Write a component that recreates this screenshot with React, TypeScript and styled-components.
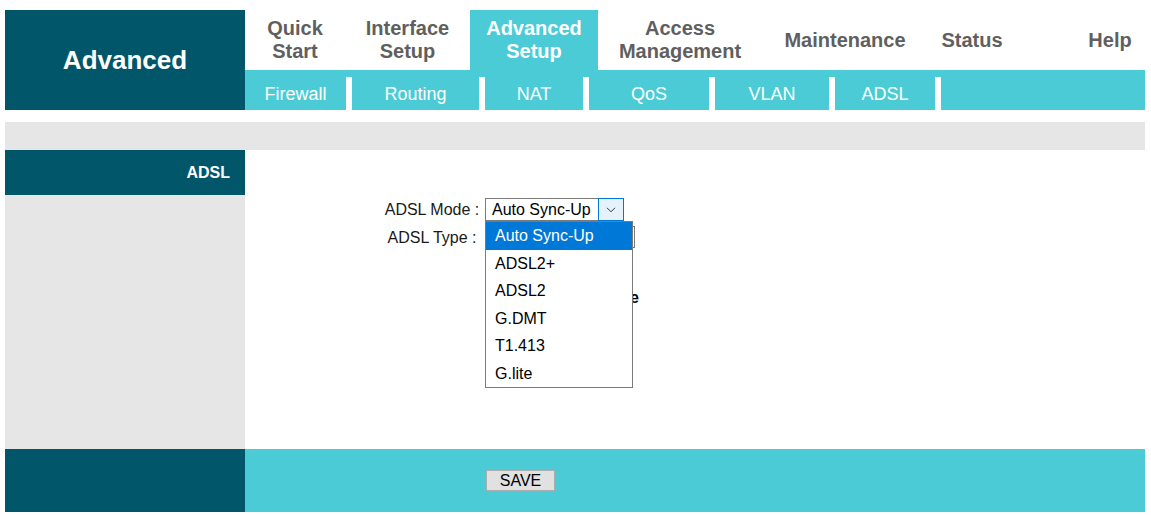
import React from "react";
import styled, { createGlobalStyle } from "styled-components";

const DARK = "#02566a";
const TEAL = "#4bcbd6";
const GRAY = "#e6e6e6";

const GlobalStyle = createGlobalStyle`
  html, body { background: #ffffff; }
  body {
    margin: 10px 0 0 5px;
    font-family: "Liberation Sans", Arial, sans-serif;
  }
  * { box-sizing: border-box; }
`;

const Page = styled.div`
  width: 1140px;
  display: flex;
  flex-direction: column;
`;

/* ---------- header ---------- */
const Header = styled.header`
  display: flex;
  height: 100px;
`;

const Brand = styled.div`
  width: 240px;
  background: ${DARK};
  color: #fff;
  font-weight: bold;
  font-size: 26px;
  display: flex;
  align-items: center;
  justify-content: center;
`;

const NavColumn = styled.div`
  flex: 1;
  display: flex;
  flex-direction: column;
`;

const TopMenu = styled.nav`
  height: 60px;
  display: flex;
`;

const TopItem = styled.div<{ $w?: number; $active?: boolean }>`
  ${(p) => (p.$w ? `width: ${p.$w}px;` : "flex: 1;")}
  display: flex;
  align-items: center;
  justify-content: center;
  text-align: center;
  font-weight: bold;
  font-size: 20px;
  line-height: 23px;
  color: ${(p) => (p.$active ? "#ffffff" : "#5f5f5f")};
  background: ${(p) => (p.$active ? TEAL : "transparent")};
`;

const SubMenu = styled.nav`
  height: 40px;
  background: ${TEAL};
  padding-top: 7px;
  display: flex;
`;

const SubItem = styled.div<{ $w: number }>`
  width: ${(p) => p.$w}px;
  border-right: 6px solid #ffffff;
  display: flex;
  align-items: center;
  justify-content: center;
  color: #ffffff;
  font-size: 18px;
  padding-top: 2px;
`;

/* ---------- strip ---------- */
const Strip = styled.div`
  margin-top: 12px;
  height: 28px;
  background: ${GRAY};
`;

/* ---------- body ---------- */
const Body = styled.div`
  display: flex;
  height: 299px;
`;

const Sidebar = styled.aside`
  width: 240px;
  background: ${GRAY};
  display: flex;
  flex-direction: column;
`;

const SideTitle = styled.div`
  height: 45px;
  background: ${DARK};
  color: #fff;
  font-weight: bold;
  font-size: 16px;
  display: flex;
  align-items: center;
  justify-content: flex-end;
  padding-right: 15px;
`;

const Content = styled.main`
  flex: 1;
  background: #ffffff;
  padding: 48px 0 0 137px;
  display: flex;
  flex-direction: column;
`;

const FormRow = styled.div<{ $mt?: number }>`
  display: flex;
  align-items: center;
  gap: 3px;
  margin-top: ${(p) => p.$mt ?? 0}px;
`;

const Label = styled.div<{ $shift?: number }>`
  width: 100px;
  text-align: center;
  font-size: 16px;
  color: #1a1a1a;
  padding-top: ${(p) => p.$shift ?? 0}px;
`;

const Field = styled.div`
  position: relative;
`;

const SelectBox = styled.div<{ $w: number; $h: number }>`
  width: ${(p) => p.$w}px;
  height: ${(p) => p.$h}px;
  border: 1px solid #7a7a7a;
  background: #fff;
  display: flex;
  align-items: center;
  font-size: 16px;
  color: #000;
  padding-left: 6px;
`;

const SelectText = styled.span`
  flex: 1;
`;

const ArrowButton = styled.span`
  width: 26px;
  height: 23px;
  margin: -1px -1px -1px 0;
  border: 1px solid #0078d7;
  background: #e5f1fb;
  display: flex;
  align-items: center;
  justify-content: center;
`;

const Note = styled.div`
  margin-left: 104px;
  padding-left: 1px;
  font-size: 16px;
  font-weight: bold;
  color: #000;
`;

/* open option list of the mode select */
const OptionList = styled.ul`
  position: absolute;
  left: 0;
  top: 23px;
  width: 148px;
  margin: 0;
  padding: 0;
  list-style: none;
  background: #fff;
  border: 1px solid #7a7a7a;
  z-index: 5;
`;

const Option = styled.li<{ $selected?: boolean }>`
  height: 27.5px;
  display: flex;
  align-items: center;
  padding-left: 9px;
  padding-top: 1px;
  font-size: 16px;
  color: ${(p) => (p.$selected ? "#fff" : "#000")};
  background: ${(p) => (p.$selected ? "#0078d7" : "transparent")};
`;

/* ---------- footer ---------- */
const Footer = styled.footer`
  display: flex;
  height: 63px;
`;

const FooterSide = styled.div`
  width: 240px;
  background: ${DARK};
`;

const FooterMain = styled.div`
  flex: 1;
  background: ${TEAL};
  padding: 21px 0 0 241px;
`;

const SaveButton = styled.button`
  width: 69px;
  height: 21px;
  background: #e1e1e1;
  border: 1px solid #adadad;
  font-family: "Liberation Sans", Arial, sans-serif;
  font-size: 16px;
  color: #000;
  padding: 0;
  display: flex;
  align-items: center;
  justify-content: center;
`;

const topItems: { label: string[]; w?: number; active?: boolean }[] = [
  { label: ["Quick", "Start"], w: 100 },
  { label: ["Interface", "Setup"], w: 125 },
  { label: ["Advanced", "Setup"], w: 128, active: true },
  { label: ["Access", "Management"], w: 164 },
  { label: ["Maintenance"], w: 166 },
  { label: ["Status"], w: 88 },
  { label: [""] },
  { label: ["Help"], w: 70 },
];

const subItems = [
  { label: "Firewall", w: 107 },
  { label: "Routing", w: 133 },
  { label: "NAT", w: 104 },
  { label: "QoS", w: 126 },
  { label: "VLAN", w: 120 },
  { label: "ADSL", w: 106 },
];

const modes = ["Auto Sync-Up", "ADSL2+", "ADSL2", "G.DMT", "T1.413", "G.lite"];

const Chevron = () => (
  <svg width="10" height="6" viewBox="0 0 10 6">
    <path d="M1 0.8 L5 4.8 L9 0.8" fill="none" stroke="#333" strokeWidth="1" />
  </svg>
);

export default function App() {
  return (
    <>
      <GlobalStyle />
      <Page>
        <Header>
          <Brand>Advanced</Brand>
          <NavColumn>
            <TopMenu>
              {topItems.map((t, i) => (
                <TopItem key={i} $w={t.w} $active={t.active}>
                  <span>
                    {t.label.map((l, j) => (
                      <React.Fragment key={j}>
                        {j > 0 && <br />}
                        {l}
                      </React.Fragment>
                    ))}
                  </span>
                </TopItem>
              ))}
            </TopMenu>
            <SubMenu>
              {subItems.map((s) => (
                <SubItem key={s.label} $w={s.w}>
                  {s.label}
                </SubItem>
              ))}
            </SubMenu>
          </NavColumn>
        </Header>

        <Strip />

        <Body>
          <Sidebar>
            <SideTitle>ADSL</SideTitle>
          </Sidebar>
          <Content>
            <FormRow>
              <Label>ADSL Mode :</Label>
              <Field>
                <SelectBox $w={139} $h={23}>
                  <SelectText>Auto Sync-Up</SelectText>
                  <ArrowButton>
                    <Chevron />
                  </ArrowButton>
                </SelectBox>
                <OptionList>
                  {modes.map((m, i) => (
                    <Option key={m} $selected={i === 0}>
                      {m}
                    </Option>
                  ))}
                </OptionList>
              </Field>
            </FormRow>
            <FormRow $mt={5}>
              <Label $shift={2}>ADSL Type :</Label>
              <Field>
                <SelectBox $w={150} $h={22} />
              </Field>
            </FormRow>
            <FormRow $mt={41}>
              <Note>Auto Sync-Up Mode</Note>
            </FormRow>
          </Content>
        </Body>

        <Footer>
          <FooterSide />
          <FooterMain>
            <SaveButton>SAVE</SaveButton>
          </FooterMain>
        </Footer>
      </Page>
    </>
  );
}
